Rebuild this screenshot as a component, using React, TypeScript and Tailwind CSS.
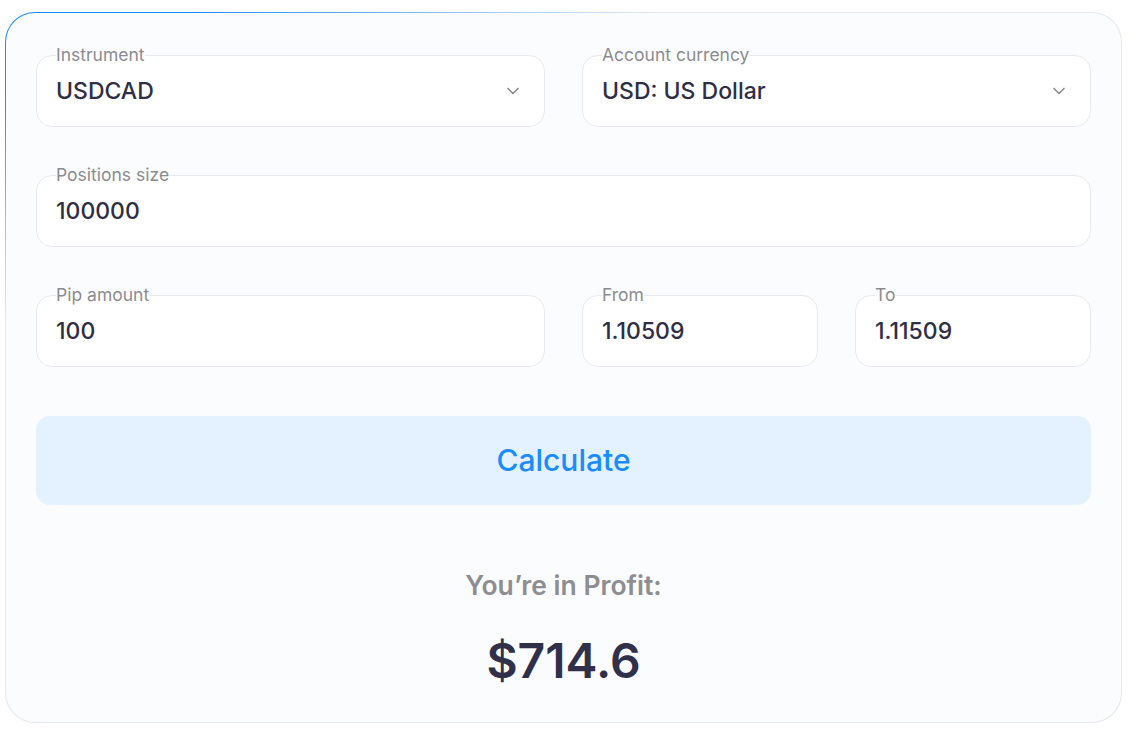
import React from 'react';
import { ChevronDown } from 'lucide-react';

interface FieldProps {
  label: string;
  value: string;
  select?: boolean;
}

// Outlined field with the label sitting in the top border
const Field = ({ label, value, select = false }: FieldProps) => (
  <fieldset className="h-[80px] rounded-[16px] border border-[#e8e9ee] bg-white px-[19px] pt-[2px] pb-[9px] min-w-0">
    <legend className="px-0 text-[17.5px] leading-[16px] text-[#8c8c90]">{label}</legend>
    <div className="flex h-[52px] items-center justify-between">
      <span className="text-[23px] font-medium text-[#2e2e45]">{value}</span>
      {select && <ChevronDown size={20} strokeWidth={2} className="mr-[2px] text-[#8a8a8f]" />}
    </div>
  </fieldset>
);

export default function App() {
  return (
    <div className="min-h-screen bg-white pt-[12px] pl-[5px] font-['Inter','Liberation_Sans',sans-serif]">
      {/* gradient border wrapper */}
      <div className="w-[1117px] rounded-[30px] bg-[linear-gradient(155deg,#1a8cff_0%,#1a8cff_7%,#5aaaf7_13%,#a6cdf8_19%,#e6e8ee_25%)] p-px">
        <div className="rounded-[29px] bg-[#fbfcfe] px-[30px] pt-[34px] pb-[33px]">
          <div className="grid grid-cols-2 gap-x-[37px] gap-y-[40px]">
            <Field label="Instrument" value="USDCAD" select />
            <Field label="Account currency" value="USD: US Dollar" select />
            <div className="col-span-2">
              <Field label="Positions size" value="100000" />
            </div>
            <Field label="Pip amount" value="100" />
            <div className="grid grid-cols-2 gap-x-[37px]">
              <Field label="From" value="1.10509" />
              <Field label="To" value="1.11509" />
            </div>
          </div>

          <button className="mt-[49px] flex h-[89px] w-full items-center justify-center rounded-[14px] bg-[#e3f2fe] text-[30px] font-medium text-[#1a8cff]">
            Calculate
          </button>

          <div className="mt-[64px] flex flex-col items-center">
            <p className="text-[26.5px] font-semibold leading-[32px] text-[#8d8d92]">You’re in Profit:</p>
            <p className="mt-[32px] text-[48px] font-semibold leading-[56px] text-[#30304a]">$714.6</p>
          </div>
        </div>
      </div>
    </div>
  );
}
